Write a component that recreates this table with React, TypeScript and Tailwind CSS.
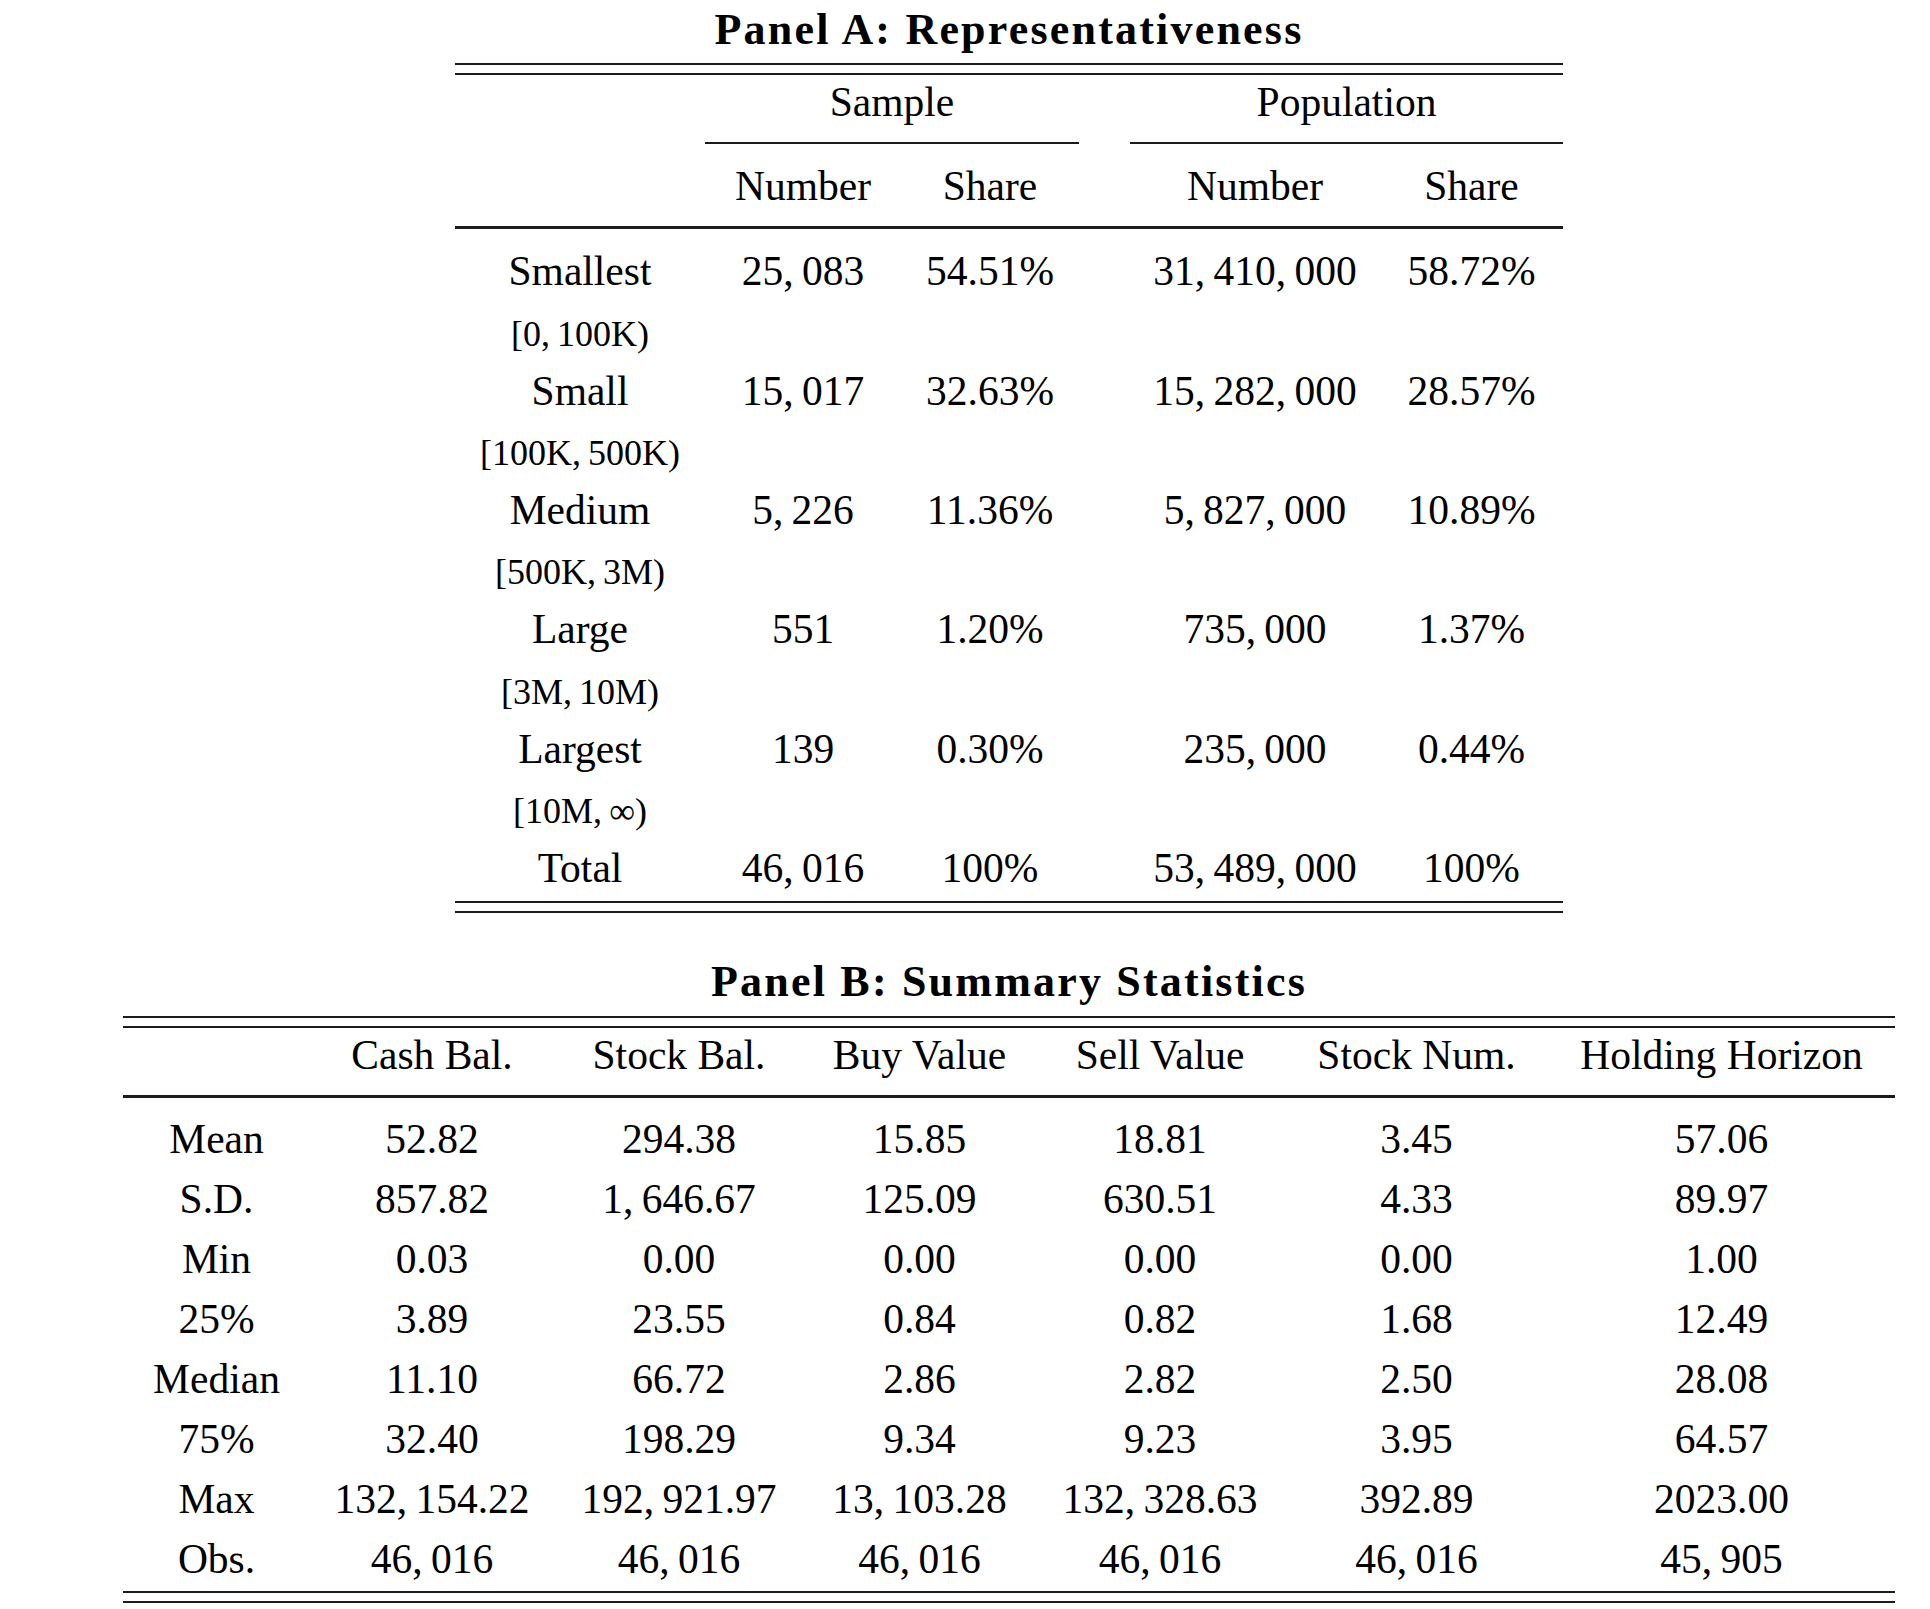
import React from 'react';

// math-mode style grouping: a thin space after each comma
const fmt = (s: string) => s.replace(/,/g, ',\u2009');

const DoubleRule: React.FC<{ className?: string }> = ({ className = '' }) => (
  <div className={`flex w-full flex-col gap-[8px] ${className}`}>
    <div className="h-[2px] bg-[#1c1c1c]" />
    <div className="h-[2px] bg-[#1c1c1c]" />
  </div>
);

const sizeRows = [
  { label: 'Smallest', range: '[0,100K)', n: '25,083', s: '54.51%', pn: '31,410,000', ps: '58.72%' },
  { label: 'Small', range: '[100K,500K)', n: '15,017', s: '32.63%', pn: '15,282,000', ps: '28.57%' },
  { label: 'Medium', range: '[500K,3M)', n: '5,226', s: '11.36%', pn: '5,827,000', ps: '10.89%' },
  { label: 'Large', range: '[3M,10M)', n: '551', s: '1.20%', pn: '735,000', ps: '1.37%' },
  { label: 'Largest', range: '[10M,\u221E)', n: '139', s: '0.30%', pn: '235,000', ps: '0.44%' },
];

const statCols = ['Cash Bal.', 'Stock Bal.', 'Buy Value', 'Sell Value', 'Stock Num.', 'Holding Horizon'];

const statRows: [string, string[]][] = [
  ['Mean', ['52.82', '294.38', '15.85', '18.81', '3.45', '57.06']],
  ['S.D.', ['857.82', '1,646.67', '125.09', '630.51', '4.33', '89.97']],
  ['Min', ['0.03', '0.00', '0.00', '0.00', '0.00', '1.00']],
  ['25%', ['3.89', '23.55', '0.84', '0.82', '1.68', '12.49']],
  ['Median', ['11.10', '66.72', '2.86', '2.82', '2.50', '28.08']],
  ['75%', ['32.40', '198.29', '9.34', '9.23', '3.95', '64.57']],
  ['Max', ['132,154.22', '192,921.97', '13,103.28', '132,328.63', '392.89', '2023.00']],
  ['Obs.', ['46,016', '46,016', '46,016', '46,016', '46,016', '45,905']],
];

const gridA = 'grid grid-cols-[250px_196px_178px_51px_250px_183px]';
const gridB = 'grid grid-cols-[187px_244px_250px_231px_250px_263px_347px]';

const Cell: React.FC<{ children?: React.ReactNode; className?: string }> = ({ children, className = '' }) => (
  <div className={`flex items-center justify-center whitespace-nowrap ${className}`}>{children}</div>
);

const PanelA: React.FC = () => (
  <div className="flex w-[1108px] flex-col">
    <div className="flex h-[60px] items-center justify-center text-[44px] font-bold tracking-[0.05em]">
      Panel A: Representativeness
    </div>
    <DoubleRule className="mt-[3px]" />
    <div className={`${gridA} h-[55px]`}>
      <Cell className="col-start-2 col-span-2">Sample</Cell>
      <Cell className="col-start-5 col-span-2">Population</Cell>
    </div>
    <div className={`${gridA} mt-[12px] h-[2px]`}>
      <div className="col-start-2 col-span-2 bg-[#1c1c1c]" />
      <div className="col-start-5 col-span-2 bg-[#1c1c1c]" />
    </div>
    <div className={`${gridA} h-[82px] pt-[4px]`}>
      <div />
      <Cell>Number</Cell>
      <Cell>Share</Cell>
      <div />
      <Cell>Number</Cell>
      <Cell>Share</Cell>
    </div>
    <div className="h-[3px] bg-[#1c1c1c]" />
    <div className="mt-[15px] flex flex-col">
      {sizeRows.map((r) => (
        <div key={r.label} className="flex flex-col">
          <div className={`${gridA} h-[56px]`}>
            <Cell>{r.label}</Cell>
            <Cell>{fmt(r.n)}</Cell>
            <Cell>{r.s}</Cell>
            <div />
            <Cell>{fmt(r.pn)}</Cell>
            <Cell>{r.ps}</Cell>
          </div>
          <div className={`${gridA} h-[63.4px] pt-[4px]`}>
            <Cell className="text-[36px]">{fmt(r.range)}</Cell>
          </div>
        </div>
      ))}
      <div className={`${gridA} h-[56px]`}>
        <Cell>Total</Cell>
        <Cell>{fmt('46,016')}</Cell>
        <Cell>100%</Cell>
        <div />
        <Cell>{fmt('53,489,000')}</Cell>
        <Cell>100%</Cell>
      </div>
    </div>
    <DoubleRule className="mt-[4px]" />
  </div>
);

const PanelB: React.FC = () => (
  <div className="flex w-[1772px] flex-col">
    <div className="mt-[39px] flex h-[60px] items-center justify-center text-[44px] font-bold tracking-[0.05em]">
      Panel B: Summary Statistics
    </div>
    <DoubleRule className="mt-[4px]" />
    <div className={`${gridB} h-[56px]`}>
      <div />
      {statCols.map((c) => (
        <Cell key={c}>{c}</Cell>
      ))}
    </div>
    <div className="mt-[11px] h-[3px] bg-[#1c1c1c]" />
    <div className="mt-[12px] flex flex-col">
      {statRows.map(([label, vals]) => (
        <div key={label} className={`${gridB} h-[60px]`}>
          <Cell>{label}</Cell>
          {vals.map((v, i) => (
            <Cell key={i}>{fmt(v)}</Cell>
          ))}
        </div>
      ))}
    </div>
    <DoubleRule className="mt-[1px]" />
  </div>
);

export default function App() {
  return (
    <div className="flex h-[1609px] w-[1930px] flex-col items-center overflow-hidden bg-white pl-[88px] font-['Liberation_Serif',serif] text-[41.5px] leading-none text-black">
      <PanelA />
      <PanelB />
    </div>
  );
}
